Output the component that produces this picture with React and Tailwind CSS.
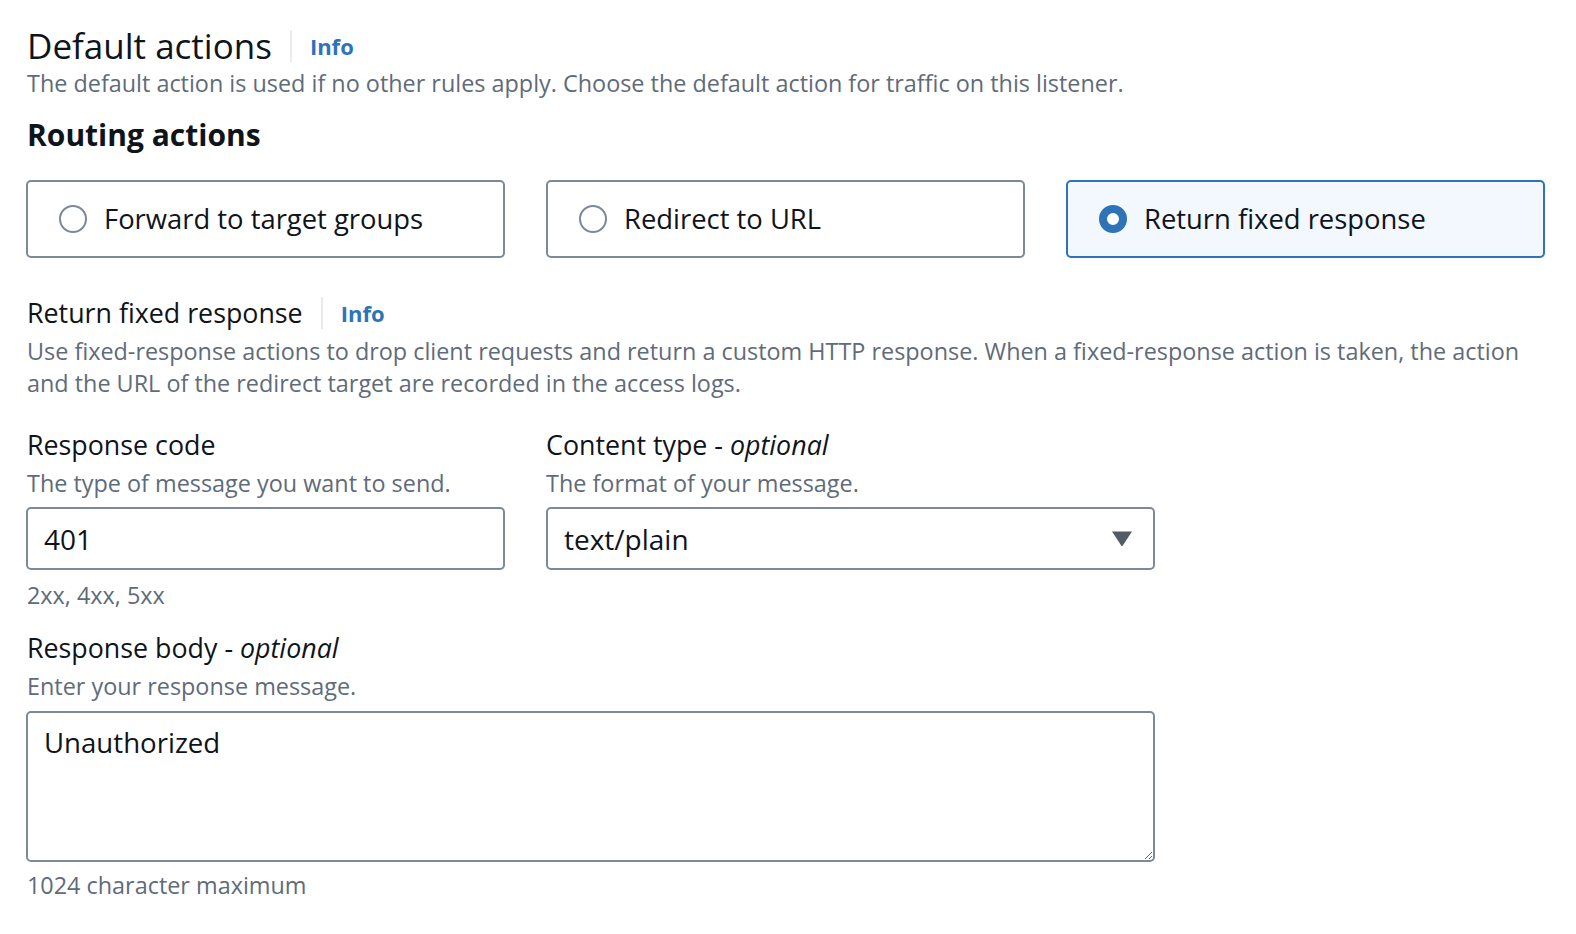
import React, { useState } from 'react';

const font = { fontFamily: '"Open Sans", "Noto Sans", sans-serif' };

const InfoLink = () => (
  <>
    <span className="mx-[18px] h-[32px] w-[2px] bg-[#e9ebed]" />
    <a className="font-bold text-[#2e73b8] text-[22px] leading-[30px] cursor-pointer">Info</a>
  </>
);

const RadioCard = ({ label, checked, onClick }) => (
  <button
    onClick={onClick}
    className={`flex items-center h-[78px] rounded-[5px] border-2 pl-[31px] text-left ${
      checked ? 'border-[#2e73b8] bg-[#f2f8fd]' : 'border-[#7d8998] bg-white'
    }`}
  >
    {checked ? (
      <span className="w-[28px] h-[28px] rounded-full border-[8px] border-[#2e73b8] bg-white shrink-0" />
    ) : (
      <span className="w-[28px] h-[28px] rounded-full border-2 border-[#7d8998] bg-white shrink-0" />
    )}
    <span className="ml-[17px] text-[27.4px] leading-[34px] text-[#0f141a]">{label}</span>
  </button>
);

const Label = ({ children }) => (
  <div className="text-[26.8px] leading-[34px] text-[#0f141a]">{children}</div>
);

const Hint = ({ children, className = '' }) => (
  <div className={`text-[23.4px] leading-[32px] text-[#5f6b7a] ${className}`}>{children}</div>
);

export default function App() {
  const [action, setAction] = useState('fixed');
  const [code, setCode] = useState('401');
  const [body, setBody] = useState('Unauthorized');

  const actions = [
    { id: 'forward', label: 'Forward to target groups' },
    { id: 'redirect', label: 'Redirect to URL' },
    { id: 'fixed', label: 'Return fixed response' },
  ];

  return (
    <div className="min-h-screen bg-white pl-[27px] pt-[24px]" style={font}>
      <div className="flex items-center">
        <h2 className="text-[35px] leading-[43px] text-[#0f141a]">Default actions</h2>
        <InfoLink />
      </div>
      <p className="text-[23.4px] leading-[32px] text-[#5f6b7a]">
        The default action is used if no other rules apply. Choose the default action for traffic on this listener.
      </p>

      <h3 className="mt-[17px] text-[30px] leading-[38px] font-bold text-[#0f141a]">Routing actions</h3>

      <div className="mt-[26px] -ml-[1px] grid grid-cols-3 gap-[41px] w-[1519px]">
        {actions.map((a) => (
          <RadioCard key={a.id} label={a.label} checked={action === a.id} onClick={() => setAction(a.id)} />
        ))}
      </div>

      <div className="mt-[38px] flex items-center">
        <Label>Return fixed response</Label>
        <InfoLink />
      </div>
      <Hint className="mt-[5px] w-[1505px]">
        Use fixed-response actions to drop client requests and return a custom HTTP response. When a fixed-response action is taken, the action and the URL of the redirect target are recorded in the access logs.
      </Hint>

      <div className="mt-[29px] flex gap-[41px] -ml-[1px]">
        <div className="w-[479px]">
          <div className="pl-[1px]">
            <Label>Response code</Label>
            <Hint className="mt-[5px]">The type of message you want to send.</Hint>
          </div>
          <input
            value={code}
            onChange={(e) => setCode(e.target.value)}
            className="mt-[8px] w-full h-[63px] rounded-[5px] border-2 border-[#7d8998] px-[16px] text-[28px] text-[#0f141a] outline-none"
          />
          <Hint className="mt-[9px] pl-[1px]">2xx, 4xx, 5xx</Hint>
        </div>
        <div className="w-[609px]">
          <Label>
            Content type - <i>optional</i>
          </Label>
          <Hint className="mt-[5px]">The format of your message.</Hint>
          <div className="mt-[8px] flex items-center justify-between h-[63px] rounded-[5px] border-2 border-[#7d8998] pl-[16px] pr-[20px]">
            <span className="text-[28px] text-[#0f141a]">text/plain</span>
            <svg width="22" height="17" viewBox="0 0 22 17">
              <path d="M1 1.5 L21 1.5 L11.8 15.5 Q11 16.5 10.2 15.5 Z" fill="#545b64" />
            </svg>
          </div>
        </div>
      </div>

      <div className="mt-[20px]">
        <Label>
          Response body - <i>optional</i>
        </Label>
        <Hint className="mt-[5px]">Enter your response message.</Hint>
        <textarea
          value={body}
          onChange={(e) => setBody(e.target.value)}
          className="block mt-[9px] -ml-[1px] w-[1129px] h-[151px] rounded-[5px] border-2 border-[#7d8998] px-[16px] py-[12px] text-[27.6px] leading-[34px] text-[#0f141a] outline-none"
        />
        <Hint className="mt-[7px]">1024 character maximum</Hint>
      </div>
    </div>
  );
}
